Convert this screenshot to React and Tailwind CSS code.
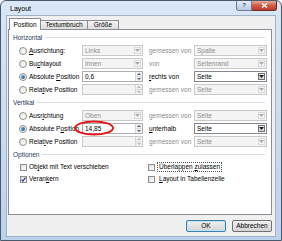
import React from "react";

function Arrow({ dark }) {
  return (
    <svg width="5" height="3" viewBox="0 0 5 3">
      <path d="M0 0h5L2.5 3z" fill={dark ? "#1a1a1a" : "#a9a9a9"} />
    </svg>
  );
}

function Combo({ value, w, enabled }) {
  return (
    <div
      className={`flex h-[11px] ${w} items-stretch border ${
        enabled ? "border-[#828790] bg-white text-black" : "border-[#c9c9c9] bg-[#f4f4f4] text-[#8d8d8d]"
      }`}
    >
      <span className="flex-1 pl-[2px] leading-[9px]">{value}</span>
      <span
        className={`m-px flex w-[7px] items-center justify-center border ${
          enabled ? "border-[#707070] bg-gradient-to-b from-[#f2f2f2] to-[#d5d5d5]" : "border-[#d9d9d9] bg-[#f4f4f4]"
        }`}
      >
        <Arrow dark={enabled} />
      </span>
    </div>
  );
}

function Spin({ value, enabled }) {
  const c = enabled ? "#4d6185" : "#b5b5b5";
  return (
    <div
      className={`flex h-[11px] w-[61px] items-stretch border ${
        enabled ? "border-[#abadb3] bg-white" : "border-[#c9c9c9] bg-[#f4f4f4]"
      }`}
    >
      <span className="flex-1 pl-[2px] leading-[9px] text-black">{value}</span>
      <span className="flex w-[7px] flex-col border-l border-[#d6d6d6] bg-[#f0f0f0]">
        <span className="flex flex-1 items-center justify-center">
          <svg width="4" height="2" viewBox="0 0 4 2">
            <path d="M0 2h4L2 0z" fill={c} />
          </svg>
        </span>
        <span className="flex flex-1 items-center justify-center border-t border-[#dcdcdc]">
          <svg width="4" height="2" viewBox="0 0 4 2">
            <path d="M0 0h4L2 2z" fill={c} />
          </svg>
        </span>
      </span>
    </div>
  );
}

function Radio({ on }) {
  return (
    <span className="flex h-[8px] w-[8px] items-center justify-center rounded-full border border-[#8e8f8f] bg-gradient-to-br from-[#e6e6e6] to-white">
      {on && <span className="h-[4px] w-[4px] rounded-full bg-gradient-to-br from-[#6fb4ea] to-[#15508f]" />}
    </span>
  );
}

function Check({ on }) {
  return (
    <span className="flex h-[7px] w-[7px] items-center justify-center border border-[#8e8f8f] bg-gradient-to-br from-[#dcdcdc] to-white">
      {on && (
        <svg width="5" height="5" viewBox="0 0 5 5">
          <path d="M0.5 2.6l1.4 1.5L4.5 0.6" fill="none" stroke="#24367a" strokeWidth="1.1" />
        </svg>
      )}
    </span>
  );
}

function Header({ children }) {
  return (
    <div className="flex h-[13px] items-center gap-[3px] pl-[4px] pr-[6px] text-[#1e395b]">
      <span>{children}</span>
      <span className="h-px flex-1 bg-[#d5dfe5]" />
    </div>
  );
}

function Row({ radio, label, field, label2, gray2, combo }) {
  return (
    <div className="flex h-[13px] items-center pl-[10px]">
      <Radio on={radio} />
      <span className="ml-[2px] w-[53px]">{label}</span>
      {field}
      <span className={`ml-[6px] w-[45px] ${gray2 ? "text-[#8d8d8d]" : ""}`}>{label2}</span>
      {combo}
    </div>
  );
}

const u = (s) => <span className="underline">{s}</span>;

export default function App() {
  return (
    <div className="flex h-[241px] w-[282px] flex-col rounded-t-[6px] border border-[#4a5a6e] bg-gradient-to-b from-[#d9e7f6] to-[#bcd2ea] font-['Liberation_Sans',Arial,sans-serif] text-[6.5px] text-black">
      <div className="flex h-[14px] items-start">
        <span className="pl-[9px] pt-[3px] text-[7px]">Layout</span>
        <div className="ml-auto mr-[4px] flex">
          <span className="flex h-[10px] w-[16px] items-center justify-center rounded-bl-[3px] border border-t-0 border-[#6d7f96] bg-gradient-to-b from-[#e4edf7] to-[#b7cbe2] text-[6px] font-bold text-[#3a4a60]">
            ?
          </span>
          <span className="flex h-[10px] w-[25px] items-center justify-center rounded-br-[3px] border border-l-0 border-t-0 border-[#6e2a22] bg-gradient-to-b from-[#e9a99a] via-[#cf5a44] to-[#c0382a]">
            <svg width="7" height="5" viewBox="0 0 7 5">
              <path d="M1 0.5l5 4M6 0.5l-5 4" stroke="white" strokeWidth="1.4" />
            </svg>
          </span>
        </div>
      </div>

      <div className="mx-[5px] flex h-[222px] flex-col border border-[#9fb3c8] bg-[#f0f0f0]">
        <div className="mt-[2px] ml-[2px] flex h-[12px] items-end">
          <span className="relative z-10 flex h-[12px] w-[32px] items-center justify-center border border-b-0 border-[#898c95] bg-white">
            Position
          </span>
          <span className="-ml-px flex h-[10px] w-[48px] items-center justify-center border border-[#898c95] bg-gradient-to-b from-[#f3f3f3] to-[#dddddd]">
            Textumbruch
          </span>
          <span className="-ml-px flex h-[10px] w-[32px] items-center justify-center border border-[#898c95] bg-gradient-to-b from-[#f3f3f3] to-[#dddddd]">
            Größe
          </span>
        </div>

        <div className="-mt-px ml-[1px] flex h-[186px] w-[264px] flex-col border border-[#898c95] bg-white pt-px">
          <Header>Horizontal</Header>
          <Row label={<>{u("A")}usrichtung:</>} field={<Combo w="w-[61px]" value="Links" />} label2="gemessen von" gray2 combo={<Combo w="w-[73px]" value="Spalte" />} />
          <Row label={<>Bu{u("c")}hlayout</>} field={<Combo w="w-[61px]" value="Innen" />} label2="von" gray2 combo={<Combo w="w-[73px]" value="Seitenrand" />} />
          <Row radio label={<>Absolute {u("P")}osition</>} field={<Spin value="0,6" enabled />} label2={<>{u("r")}echts von</>} combo={<Combo w="w-[73px]" value="Seite" enabled />} />
          <Row label={<>Rela{u("t")}ive Position</>} field={<Spin value="" />} label2="gemessen von" gray2 combo={<Combo w="w-[73px]" value="Seite" />} />

          <Header>Vertikal</Header>
          <Row label={<>Ausr{u("i")}chtung</>} field={<Combo w="w-[61px]" value="Oben" />} label2="gemessen von" gray2 combo={<Combo w="w-[73px]" value="Seite" />} />
          <Row
            radio
            label={<>Absolute P{u("o")}sition</>}
            field={
              <div className="relative">
                <Spin value="14,85" enabled />
                <svg className="absolute -left-[9px] -top-[3px]" width="42" height="16" viewBox="0 0 42 16">
                  <ellipse cx="21" cy="8" rx="19" ry="6.5" fill="none" stroke="#e3151a" strokeWidth="2" />
                </svg>
              </div>
            }
            label2={<>{u("u")}nterhalb</>}
            combo={<Combo w="w-[73px]" value="Seite" enabled />}
          />
          <Row label={<>Relat{u("i")}ve Position</>} field={<Spin value="" />} label2="gemessen von" gray2 combo={<Combo w="w-[73px]" value="Seite" />} />

          <Header>Optionen</Header>
          <div className="flex h-[12px] items-center">
            <div className="flex w-[139px] items-center gap-[2px] pl-[11px]">
              <Check />
              <span>Ob{u("j")}ekt mit Text verschieben</span>
            </div>
            <div className="flex items-center gap-[2px]">
              <Check />
              <span className="border border-dotted border-[#555] px-px leading-[8px]">Überlappen {u("z")}ulassen</span>
            </div>
          </div>
          <div className="flex h-[12px] items-center">
            <div className="flex w-[139px] items-center gap-[2px] pl-[11px]">
              <Check on />
              <span>Veran{u("k")}ern</span>
            </div>
            <div className="flex items-center gap-[2px]">
              <Check />
              <span className="pl-[2px]">{u("L")}ayout in Tabellenzelle</span>
            </div>
          </div>
        </div>

        <div className="mt-[5px] flex justify-end gap-[6px] pr-[3px]">
          <button className="h-[12px] w-[40px] rounded-[2px] border border-[#3c7fb1] bg-gradient-to-b from-[#f2f2f2] to-[#d4d4d4] text-[6.5px] leading-[10px] shadow-[inset_0_0_0_1px_#bde3f7]">
            OK
          </button>
          <button className="h-[12px] w-[40px] rounded-[2px] border border-[#707070] bg-gradient-to-b from-[#f2f2f2] to-[#d4d4d4] text-[6.5px] leading-[10px]">
            Abbrechen
          </button>
        </div>
      </div>
    </div>
  );
}
